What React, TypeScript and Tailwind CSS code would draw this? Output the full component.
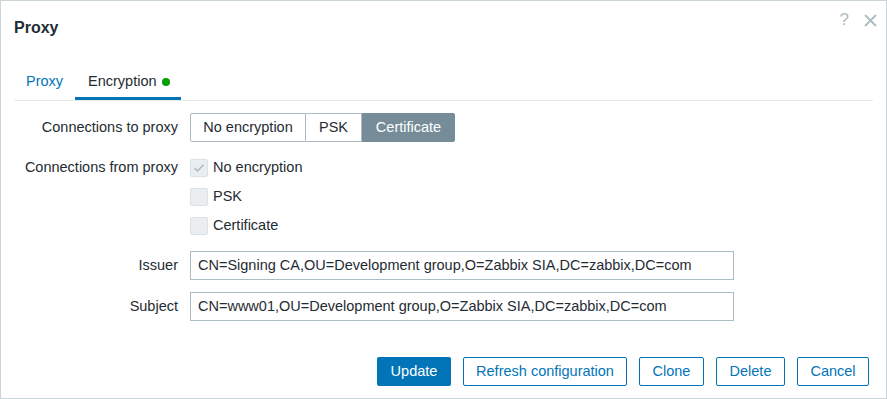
import React from 'react';

const font = { fontFamily: '"Liberation Sans", Arial, sans-serif' };

const Checkbox: React.FC<{ checked?: boolean; label: string }> = ({ checked, label }) => (
  <div className="flex items-center h-[18px]">
    <span className="w-[18px] h-[18px] rounded-[2px] border border-[#dbe1e4] bg-[#ebeef0] flex items-center justify-center">
      {checked && (
        <svg width="12" height="10" viewBox="0 0 12 10">
          <path d="M1.5 5.2 L4.6 8 L10.5 1.8" fill="none" stroke="#acbbc2" strokeWidth="1.6" />
        </svg>
      )}
    </span>
    <span className="ml-[5px]">{label}</span>
  </div>
);

export default function App() {
  return (
    <div style={font} className="w-[887px] h-[399px] bg-white border border-[#ccd5d9] flex flex-col text-[#1f2c33] text-[14.5px]">
      <div className="flex items-start justify-between pl-[13px] pr-[9px] pt-[17px]">
        <h1 className="text-[16px] leading-[20px] font-bold">Proxy</h1>
        <div className="flex items-center gap-[15px] text-[#acbbc2] mt-[-8px]">
          <span className="text-[17px] leading-[20px]">?</span>
          <svg width="13" height="13" viewBox="0 0 13 13">
            <path d="M1 1 L12 12 M12 1 L1 12" stroke="#acbbc2" strokeWidth="1.8" />
          </svg>
        </div>
      </div>

      <div className="mx-[13px] mt-[28px] flex border-b border-[#e6eaec]">
        <div className="w-[61px] h-[34px] pl-[12px] flex items-center pb-[3px] text-[#0275b8]">Proxy</div>
        <div className="w-[106px] h-[34px] pl-[13px] flex items-center border-b-[3px] border-[#0275b8]">
          Encryption
          <span className="ml-[5px] w-[8px] h-[8px] rounded-full bg-[#00a000]" />
        </div>
      </div>

      <div className="mt-[12px] grid grid-cols-[177px_1fr] gap-x-[12px]">
        <div className="h-[29px] flex items-center justify-end">Connections to proxy</div>
        <div className="flex h-[29px]">
          <div className="w-[116px] flex items-center justify-center border border-[#acbbc2] rounded-l-[2px]">No encryption</div>
          <div className="w-[56px] flex items-center justify-center border-y border-r border-[#acbbc2]">PSK</div>
          <div className="w-[93px] flex items-center justify-center bg-[#768d99] text-white rounded-r-[2px]">Certificate</div>
        </div>

        <div className="mt-[17px] h-[18px] flex items-center justify-end">Connections from proxy</div>
        <div className="mt-[17px] flex flex-col gap-[11px]">
          <Checkbox checked label="No encryption" />
          <Checkbox label="PSK" />
          <Checkbox label="Certificate" />
        </div>

        <div className="mt-[16px] h-[29px] flex items-center justify-end">Issuer</div>
        <div className="mt-[16px] w-[544px] h-[29px] border border-[#acbbc2] flex items-center px-[7px]">
          CN=Signing CA,OU=Development group,O=Zabbix SIA,DC=zabbix,DC=com
        </div>

        <div className="mt-[12px] h-[29px] flex items-center justify-end">Subject</div>
        <div className="mt-[12px] w-[544px] h-[29px] border border-[#acbbc2] flex items-center px-[7px]">
          CN=www01,OU=Development group,O=Zabbix SIA,DC=zabbix,DC=com
        </div>
      </div>

      <div className="mt-[36px] flex justify-end gap-[12px] pr-[17px]">
        <button className="w-[74px] h-[29px] rounded-[2px] bg-[#0275b8] text-white">Update</button>
        <button className="w-[164px] h-[29px] rounded-[2px] border border-[#0275b8] text-[#0275b8]">Refresh configuration</button>
        <button className="w-[65px] h-[29px] rounded-[2px] border border-[#0275b8] text-[#0275b8]">Clone</button>
        <button className="w-[69px] h-[29px] rounded-[2px] border border-[#0275b8] text-[#0275b8]">Delete</button>
        <button className="w-[72px] h-[29px] rounded-[2px] border border-[#0275b8] text-[#0275b8]">Cancel</button>
      </div>
    </div>
  );
}
